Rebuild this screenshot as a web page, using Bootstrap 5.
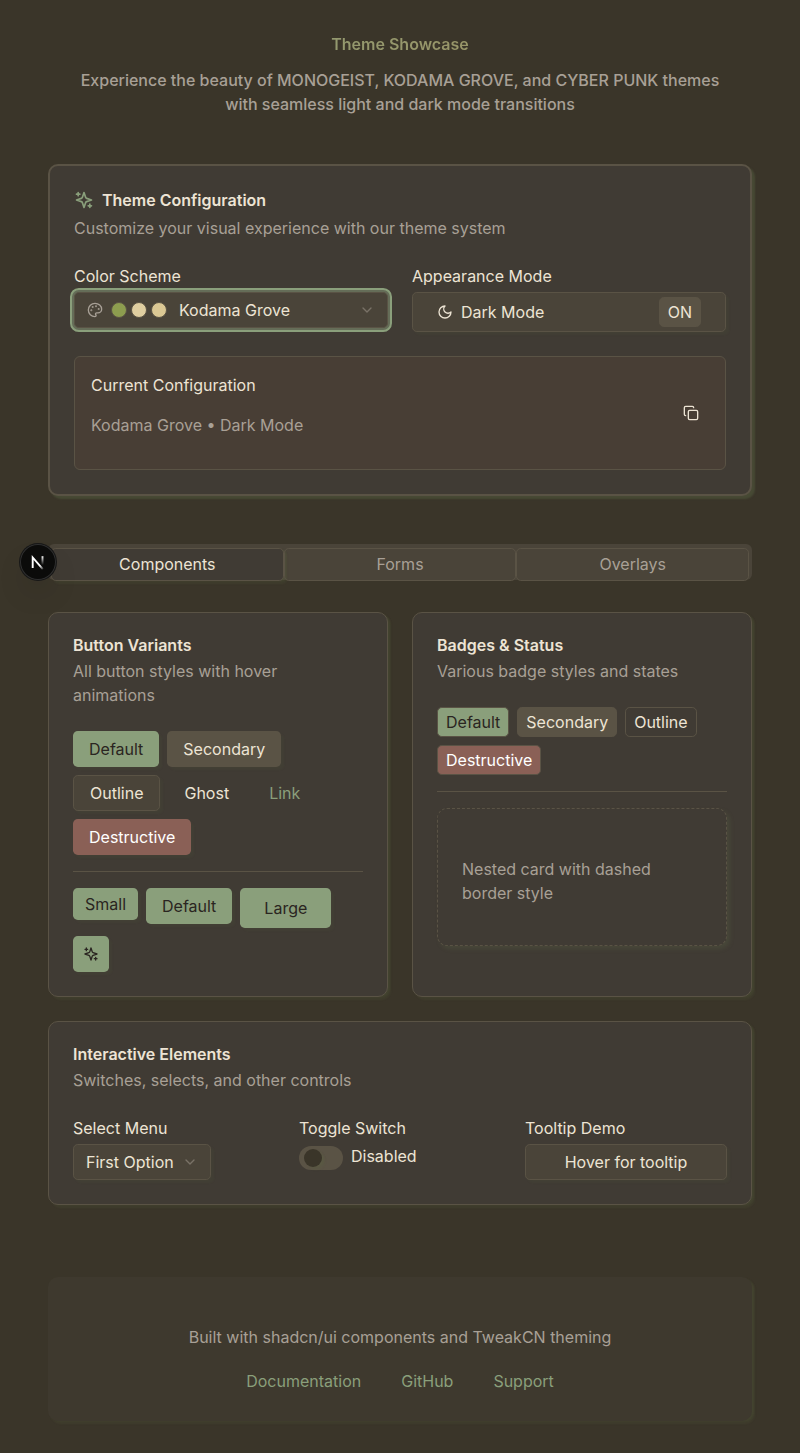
<!DOCTYPE html>
<html lang="en">
<head>
<meta charset="utf-8">
<meta name="viewport" content="width=device-width, initial-scale=1">
<title>Theme Showcase</title>
<link href="https://cdn.jsdelivr.net/npm/bootstrap@5.3.0/dist/css/bootstrap.min.css" rel="stylesheet">
<style>
:root{--bg:#3a3529;--panel:#403b34;--fg:#ede4d4;--primary:#8a9f7b;--ink:#2a2521;--secondary:#5a5345;--muted:#4a4439;--muted-fg:#a8a096;--accent:#a18f5c;--danger:#8a6056;
--sh:3px 3px 2px 0 rgba(91,109,70,.15),3px 1px 2px -1px rgba(91,109,70,.15);
--sh-xs:3px 3px 2px 0 rgba(91,109,70,.08)}
body{background:var(--bg);color:var(--fg);font:400 16px/24px Inter,sans-serif;min-height:1453px}
.page{padding:32px 48px}
h1,h2,p{font-size:16px;line-height:24px;margin:0}
h1{font-weight:600;background:linear-gradient(90deg,var(--primary),var(--accent));-webkit-background-clip:text;background-clip:text;color:transparent}
.lede{font-weight:500;color:var(--muted-fg);margin-top:12px}
.dim{color:var(--muted-fg)}
.panel{background:var(--panel);border:1px solid var(--secondary);border-radius:10px;padding:24px;box-shadow:var(--sh)}
.panel h2{font-weight:600;line-height:16px;margin-bottom:6px}
.panel-main{border-width:2px;margin-top:48px;box-shadow:3px 3px 2px 0 rgba(91,109,70,.38)}
.panel-main h2{line-height:20px}
.two{display:grid;grid-template-columns:1fr 1fr;gap:24px}
.three{display:grid;grid-template-columns:repeat(3,1fr);gap:24px}
svg{display:block;fill:none;stroke:currentColor;stroke-width:2;stroke-linecap:round;stroke-linejoin:round;flex:none}
.btn{--bs-btn-color:var(--fg);--bs-btn-hover-color:var(--fg);--bs-btn-border-width:0;--bs-btn-border-radius:4.8px;height:36px;padding:6px 16px;font-size:16px;line-height:24px;box-shadow:var(--sh-xs);white-space:nowrap}
.b-primary,.b-primary:hover{background:var(--primary);color:var(--ink)}
.b-secondary,.b-secondary:hover{background:var(--secondary)}
.b-outline,.b-outline:hover{background:var(--muted);border:1px solid var(--secondary);padding:5px 16px}
.b-danger,.b-danger:hover{background:var(--danger);color:#fff}
.b-plain{box-shadow:none}
.b-link{box-shadow:none;color:var(--primary)}
.picker{background:var(--muted);border:1px solid var(--secondary);border-radius:4.8px;height:36px;padding:0 12px;box-shadow:var(--sh-xs)}
.picker.focused{outline:2px solid var(--primary);outline-offset:2px;box-shadow:0 0 0 3px rgba(138,159,123,.5)}
.dot{width:16px;height:16px;border-radius:50%;border:1px solid var(--secondary)}
.tag{border:1px solid var(--secondary);border-radius:4.8px;padding:2px 8px;height:30px;line-height:24px}
.current{background:#483e35;border:1px solid var(--secondary);border-radius:6px;padding:16px 26px 32px 16px;margin-top:24px;height:114px}
.tabs{background:var(--muted);border-radius:6px;height:36px;padding:4px 3px 0;margin-top:48px}
.tabs button{flex:1 1 0;height:33px;padding:0 0 2px;border:1px solid var(--secondary);border-radius:4.8px;background:none;color:var(--muted-fg)}
.tabs button.on{background:var(--panel);color:var(--fg);box-shadow:var(--sh)}
.rule{height:1px;background:var(--secondary);margin:16px 0}
.nested{border:1px dashed var(--secondary);border-radius:10px;padding:48px 24px 40px;box-shadow:3px 3px 4px 0 rgba(91,109,70,.25)}
.toggle{width:44px;height:24px;border-radius:12px;background:var(--secondary);padding:3px 5px;margin-top:2px}
.toggle span{display:block;width:18px;height:18px;border-radius:50%;background:var(--bg);box-shadow:var(--sh)}
.foot{background:#3e392e;border-radius:10px;height:144px;margin-top:72px;padding-top:48px;box-shadow:var(--sh)}
.foot a{color:var(--primary);text-decoration:none}
.dev{position:absolute;left:20px;top:544px;width:36px;height:36px;border-radius:50%;background:#0b0b0a;box-shadow:0 0 0 1px #171717,inset 0 0 0 1px #303030,0 16px 32px -8px rgba(0,0,0,.24)}
</style>
</head>
<body>
<svg width="0" height="0" class="position-absolute">
<symbol id="sparkles" viewBox="0 0 24 24"><path d="m12 3-1.912 5.813a2 2 0 0 1-1.275 1.275L3 12l5.813 1.912a2 2 0 0 1 1.275 1.275L12 21l1.912-5.813a2 2 0 0 1 1.275-1.275L21 12l-5.813-1.912a2 2 0 0 1-1.275-1.275L12 3ZM5 3v4M19 17v4M3 5h4M17 19h4"/></symbol>
<symbol id="chev" viewBox="0 0 24 24"><path d="m6 9 6 6 6-6"/></symbol>
</svg>
<main class="page">
  <header class="text-center">
    <h1>Theme Showcase</h1>
    <p class="lede">Experience the beauty of MONOGEIST, KODAMA GROVE, and CYBER PUNK themes<br>with seamless light and dark mode transitions</p>
  </header>

  <section class="panel panel-main">
    <h2 class="d-flex align-items-center gap-2"><svg width="20" height="20" style="color:var(--primary)"><use href="#sparkles"/></svg>Theme Configuration</h2>
    <p class="dim">Customize your visual experience with our theme system</p>
    <div class="two mt-4">
      <div>
        <div class="mb-1">Color Scheme</div>
        <div class="picker focused d-flex align-items-center">
          <svg class="dim me-2" width="16" height="16" viewBox="0 0 24 24"><path d="M12 2C6.5 2 2 6.5 2 12s4.5 10 10 10c.926 0 1.648-.746 1.648-1.688 0-.437-.18-.835-.437-1.125-.29-.289-.438-.652-.438-1.125a1.64 1.64 0 0 1 1.668-1.668h1.996c3.051 0 5.555-2.503 5.555-5.554C21.965 6.012 17.461 2 12 2z"/><g fill="currentColor"><circle cx="13.5" cy="6.5" r=".5"/><circle cx="17.5" cy="10.5" r=".5"/><circle cx="8.5" cy="7.5" r=".5"/><circle cx="6.5" cy="12.5" r=".5"/></g></svg>
          <span class="d-flex gap-1"><span class="dot" style="background:#8d9d4f"></span><span class="dot" style="background:#dfcea0"></span><span class="dot" style="background:#dbc894"></span></span>
          <span style="margin-left:12px">Kodama Grove</span>
          <svg class="dim ms-auto opacity-50" width="16" height="16"><use href="#chev"/></svg>
        </div>
      </div>
      <div>
        <div class="mb-1">Appearance Mode</div>
        <button class="btn b-outline w-100 d-flex align-items-center" style="height:40px;padding:0 24px">
          <svg width="16" height="16" viewBox="0 0 24 24" class="me-2"><path d="M12 3a6 6 0 0 0 9 9 9 9 0 1 1-9-9Z"/></svg>Dark Mode
          <span class="tag ms-auto b-secondary">ON</span>
        </button>
      </div>
    </div>
    <div class="current d-flex justify-content-between">
      <div><p>Current Configuration</p><p class="dim mt-3">Kodama Grove • Dark Mode</p></div>
      <svg width="16" height="16" viewBox="0 0 24 24" style="margin-top:32px"><rect width="14" height="14" x="8" y="8" rx="2"/><path d="M4 16c-1.1 0-2-.9-2-2V4c0-1.1.9-2 2-2h10c1.1 0 2 .9 2 2"/></svg>
    </div>
  </section>

  <nav class="tabs d-flex"><button class="on">Components</button><button>Forms</button><button>Overlays</button></nav>

  <div class="two" style="margin-top:32px">
    <section class="panel">
      <h2>Button Variants</h2>
      <p class="dim">All button styles with hover<br>animations</p>
      <div class="d-flex flex-wrap gap-2 mt-4">
        <button class="btn b-primary">Default</button><button class="btn b-secondary">Secondary</button>
        <button class="btn b-outline">Outline</button><button class="btn b-plain">Ghost</button><button class="btn b-link">Link</button>
        <button class="btn b-danger">Destructive</button>
      </div>
      <div class="rule"></div>
      <div class="d-flex flex-wrap align-items-start gap-2">
        <button class="btn b-primary" style="height:32px;padding:4px 12px">Small</button><button class="btn b-primary">Default</button><button class="btn b-primary" style="height:40px;padding:8px 24px">Large</button>
        <button class="btn b-primary" style="padding:10px" aria-label="Sparkles"><svg width="16" height="16"><use href="#sparkles"/></svg></button>
      </div>
    </section>
    <section class="panel">
      <h2>Badges &amp; Status</h2>
      <p class="dim">Various badge styles and states</p>
      <div class="d-flex flex-wrap gap-2 mt-4">
        <span class="tag b-primary">Default</span><span class="tag b-secondary">Secondary</span><span class="tag">Outline</span><span class="tag b-danger">Destructive</span>
      </div>
      <div class="rule"></div>
      <div class="panel nested"><p class="dim">Nested card with dashed<br>border style</p></div>
    </section>
  </div>

  <section class="panel mt-4">
    <h2>Interactive Elements</h2>
    <p class="dim">Switches, selects, and other controls</p>
    <div class="three mt-4">
      <div>
        <div class="mb-1">Select Menu</div>
        <div class="picker d-inline-flex align-items-center gap-2">First Option<svg class="dim opacity-50" width="16" height="16"><use href="#chev"/></svg></div>
      </div>
      <div>
        <div class="mb-1">Toggle Switch</div>
        <div class="d-flex gap-2"><div class="toggle"><span></span></div>Disabled</div>
      </div>
      <div>
        <div class="mb-1">Tooltip Demo</div>
        <button class="btn b-outline w-100">Hover for tooltip</button>
      </div>
    </div>
  </section>

  <footer class="foot text-center">
    <p class="dim">Built with shadcn/ui components and TweakCN theming</p>
    <div class="d-flex justify-content-center" style="gap:40px;margin-top:20px"><a href="#">Documentation</a><a href="#">GitHub</a><a href="#">Support</a></div>
  </footer>
</main>
<div class="dev"><svg width="36" height="36" viewBox="0 0 36 36" style="stroke-linecap:butt;stroke-width:1.9;stroke-linejoin:miter">
<defs><linearGradient id="n1" gradientUnits="userSpaceOnUse" x1="17" y1="18" x2="23" y2="25"><stop offset=".5" stop-color="#fff"/><stop offset="1" stop-color="#fff" stop-opacity="0.2"/></linearGradient><linearGradient id="n2" gradientUnits="userSpaceOnUse" x1="22" y1="12" x2="22" y2="21"><stop stop-color="#fff"/><stop offset="1" stop-color="#fff" stop-opacity="0"/></linearGradient></defs>
<path d="M12.7 24V13.500L22.800 25.200" stroke="url(#n1)"/><path d="M22.500 12.200V22" stroke="url(#n2)"/></svg></div>
<script src="https://cdn.jsdelivr.net/npm/bootstrap@5.3.0/dist/js/bootstrap.bundle.min.js"></script>
</body>
</html>
